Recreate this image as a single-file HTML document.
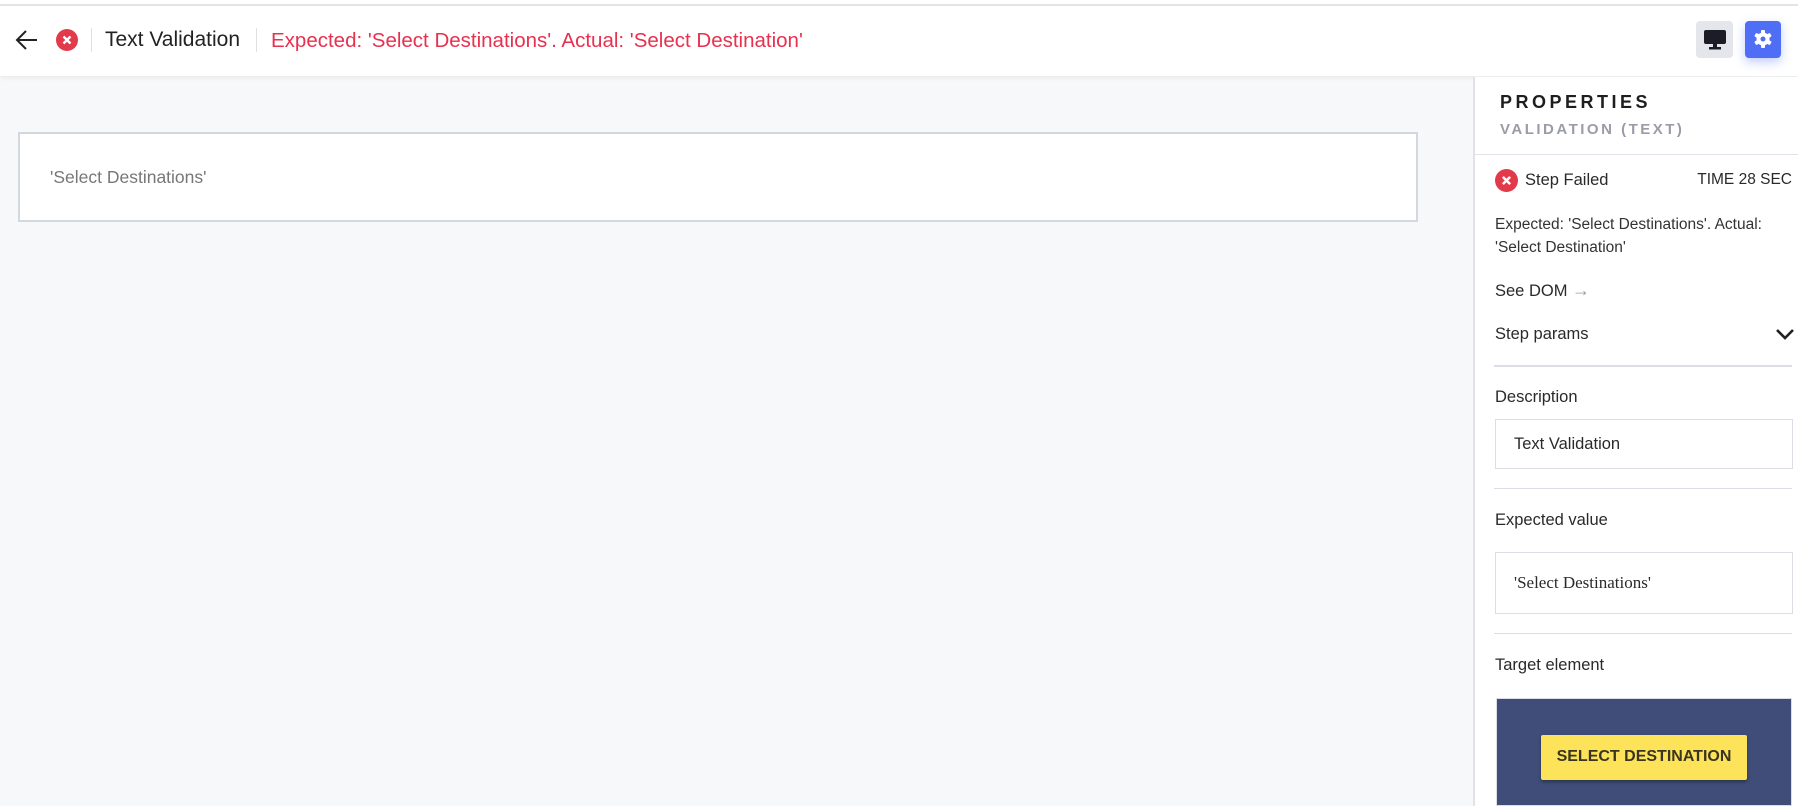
<!DOCTYPE html>
<html><head><style>
*{margin:0;padding:0;box-sizing:border-box}
body{width:1798px;height:806px;overflow:hidden;background:#f7f8fa;font-family:"Liberation Sans",sans-serif;position:relative;color:#2a2a2a}
.abs{position:absolute}
#top{left:0;width:1798px;height:72px;background:#fff;border-top:2px solid #e3e4e8;top:4px;box-shadow:0 2px 4px rgba(0,0,0,.06)}
.t{position:absolute;white-space:nowrap}
</style></head><body>
<div class="abs" style="left:0;top:0;width:1798px;height:5px;background:#fff"></div>
<div class="abs" id="top"></div>
<svg class="abs" style="left:15px;top:29px" width="24" height="22" viewBox="0 0 24 22"><path d="M22 11H3M11 2L2 11l9 9" fill="none" stroke="#222" stroke-width="2"/></svg>
<svg class="abs" style="left:56px;top:29px" width="22" height="22" viewBox="0 0 22 22"><circle cx="11" cy="11" r="11" fill="#e23a4a"/><path d="M7.5 7.5l7 7M14.5 7.5l-7 7" stroke="#fff" stroke-width="2.4"/></svg>
<div class="abs" style="left:91px;top:28px;width:1px;height:24px;background:#e0e0e0"></div>
<div class="t" style="left:105px;top:28px;font-size:21px;color:#222">Text Validation</div>
<div class="abs" style="left:256px;top:28px;width:1px;height:24px;background:#e0e0e0"></div>
<div class="t" style="left:271px;top:29px;font-size:20.5px;color:#e8304f">Expected: 'Select Destinations'. Actual: 'Select Destination'</div>
<div class="abs" style="left:1696px;top:21px;width:37px;height:37px;background:#e4e6ec;border-radius:4px"></div>
<svg class="abs" style="left:1703px;top:29px" width="24" height="22" viewBox="0 0 24 22"><rect x="1" y="1" width="22" height="14" rx="2" fill="#1a1d26"/><rect x="10" y="15" width="4" height="4" fill="#1a1d26"/><rect x="6" y="18" width="12" height="2.5" fill="#1a1d26"/></svg>
<div class="abs" style="left:1745px;top:21px;width:36px;height:37px;background:#4f6ef6;border-radius:4px;box-shadow:0 4px 10px rgba(79,110,246,.35)"></div>
<svg class="abs" style="left:1753px;top:29px" width="20" height="20" viewBox="0 0 20 20"><g fill="#fff"><circle cx="10" cy="10" r="6.5"/><rect x="8" y="1" width="4" height="18" rx="1"/><rect x="8" y="1" width="4" height="18" rx="1" transform="rotate(60 10 10)"/><rect x="8" y="1" width="4" height="18" rx="1" transform="rotate(120 10 10)"/></g><circle cx="10" cy="10" r="2.5" fill="#4f6ef6"/></svg>

<div class="abs" style="left:18px;top:132px;width:1400px;height:90px;background:#fff;border:2px solid #d3d8de"></div>
<div class="t" style="left:50px;top:167px;font-size:17.5px;color:#777">'Select Destinations'</div>

<div class="abs" style="left:1473px;top:77px;width:325px;height:729px;background:#fff;border-left:2px solid #e0e2e8"></div>
<div class="t" style="left:1500px;top:92px;font-size:18px;font-weight:bold;letter-spacing:3.5px;color:#1e1e1e">PROPERTIES</div>
<div class="t" style="left:1500px;top:121px;font-size:15px;font-weight:bold;letter-spacing:2.5px;color:#9a9ca8">VALIDATION (TEXT)</div>
<div class="abs" style="left:1475px;top:154px;width:323px;height:1px;background:#e2e3ea"></div>
<svg class="abs" style="left:1495px;top:169px" width="23" height="23" viewBox="0 0 22 22"><circle cx="11" cy="11" r="11" fill="#e23a4a"/><path d="M7.5 7.5l7 7M14.5 7.5l-7 7" stroke="#fff" stroke-width="2.4"/></svg>
<div class="t" style="left:1525px;top:171px;font-size:16.5px">Step Failed</div>
<div class="t" style="right:6px;top:171px;font-size:15.5px">TIME 28 SEC</div>
<div class="t" style="left:1495px;top:213px;font-size:15.5px;line-height:23px;color:#333">Expected: 'Select Destinations'. Actual:<br>'Select Destination'</div>
<div class="t" style="left:1495px;top:280px;font-size:16.5px">See DOM <span style="color:#999;font-size:18px">→</span></div>
<div class="t" style="left:1495px;top:325px;font-size:16.5px">Step params</div>
<svg class="abs" style="left:1775px;top:327px" width="20" height="14" viewBox="0 0 20 14"><path d="M2 3l8 8 8-8" fill="none" stroke="#222" stroke-width="2.6"/></svg>
<div class="abs" style="left:1494px;top:365px;width:298px;height:2px;background:#dcdde8"></div>
<div class="t" style="left:1495px;top:388px;font-size:16.5px">Description</div>
<div class="abs" style="left:1495px;top:419px;width:298px;height:50px;border:1px solid #dcdde6"></div>
<div class="t" style="left:1514px;top:435px;font-size:16.5px">Text Validation</div>
<div class="abs" style="left:1494px;top:488px;width:298px;height:1px;background:#dcdde6"></div>
<div class="t" style="left:1495px;top:511px;font-size:16.5px">Expected value</div>
<div class="abs" style="left:1495px;top:552px;width:298px;height:62px;border:1px solid #dcdde6"></div>
<div class="t" style="left:1514px;top:573px;font-size:17px;font-family:'Liberation Serif',serif">'Select Destinations'</div>
<div class="abs" style="left:1494px;top:633px;width:298px;height:1px;background:#dcdde6"></div>
<div class="t" style="left:1495px;top:656px;font-size:16.5px">Target element</div>
<div class="abs" style="left:1496px;top:698px;width:296px;height:108px;background:#3f4d78;border:1px solid #dcdde6"></div>
<div class="abs" style="left:1541px;top:735px;width:206px;height:45px;background:#fde35a;border-radius:2px;box-shadow:0 2px 3px rgba(0,0,0,.35)"></div>
<div class="t" style="left:1541px;top:748px;width:206px;text-align:center;font-size:16px;font-weight:bold;color:#3a3520">SELECT DESTINATION</div>
</body></html>
